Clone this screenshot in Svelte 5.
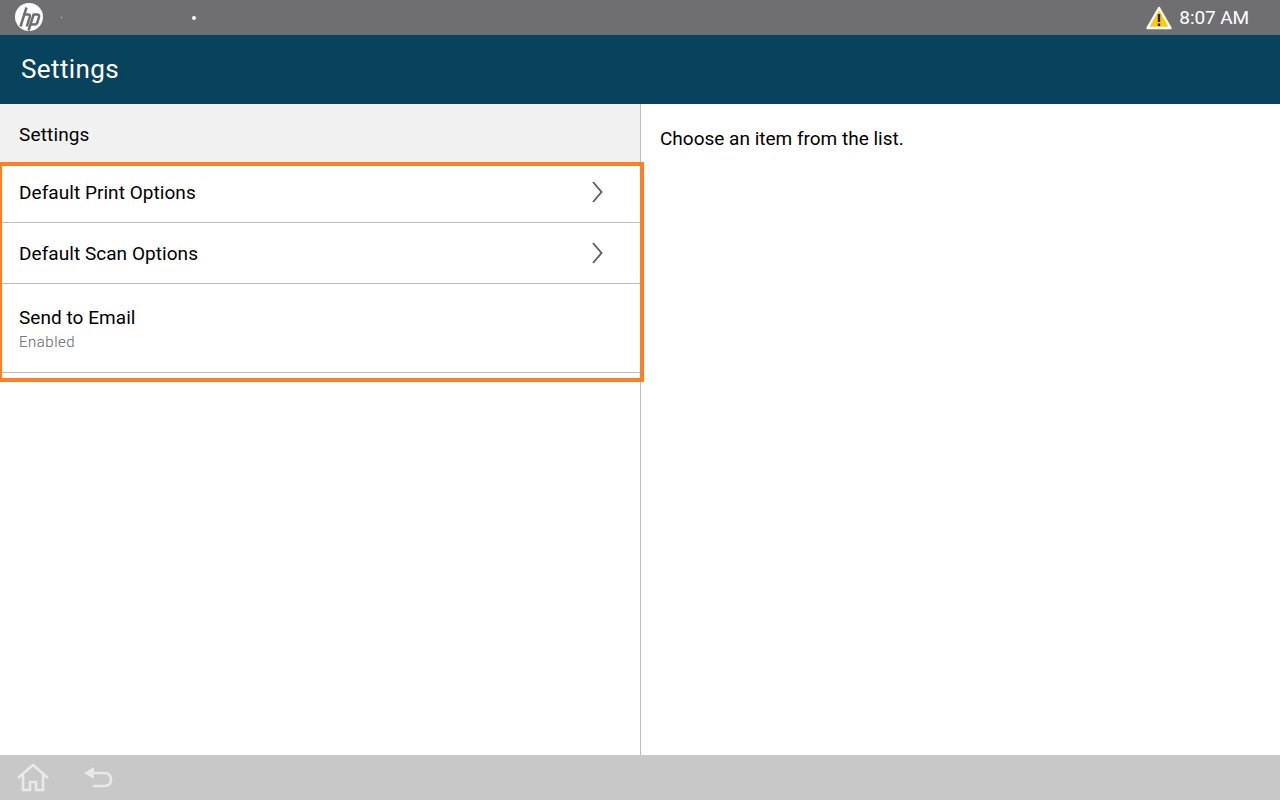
<script lang="ts">
    const options = [
        { label: "Default Print Options", chevron: true },
        { label: "Default Scan Options", chevron: true },
        { label: "Send to Email", sub: "Enabled" },
    ];
</script>

<div class="screen">
    <div class="status">
        <svg class="logo" viewBox="0 0 28 28" width="28" height="28">
            <circle cx="14" cy="14" r="14" fill="#fff" />
            <path d="M11.5 4.5 L5.5 23.5 M8 11.5 H13 Q15.5 11.5 14.8 13.8 L11.8 23.5 M18.8 11 L13.5 27.5 M18 11.5 H22 Q24.7 11.5 24 14 L22.2 20 Q21.6 21.6 19.5 21.6 H15.5" fill="none" stroke="#6f6f71" stroke-width="2.5" />
        </svg>
        <span class="dot small"></span>
        <span class="dot"></span>
        <div class="status-right">
            <svg class="warn" viewBox="0 0 26 24" width="26" height="24">
                <path d="M13 2 L24.5 22 H1.5 Z" fill="#ffcb05" stroke="#fff" stroke-width="2.4" stroke-linejoin="round" />
                <path d="M13 8 V16 M13 17.5 V20" stroke="#222" stroke-width="2.4" />
            </svg>
            <span class="time">8:07 AM</span>
        </div>
    </div>
    <header class="title">Settings</header>
    <main class="content">
        <section class="left">
            <div class="section-head">Settings</div>
            <div class="list">
                {#each options as opt}
                    <div class="row" class:tall={opt.sub}>
                        <div>
                            <div class="label">{opt.label}</div>
                            {#if opt.sub}<div class="sub">{opt.sub}</div>{/if}
                        </div>
                        {#if opt.chevron}
                            <svg class="chevron" viewBox="0 0 12 22" width="12" height="22">
                                <path d="M2 1 L10.5 11 L2 21" fill="none" stroke="#606062" stroke-width="1.9" />
                            </svg>
                        {/if}
                    </div>
                {/each}
                <div class="highlight"></div>
            </div>
        </section>
        <section class="right">Choose an item from the list.</section>
    </main>
    <footer class="nav">
        <svg viewBox="0 0 34 30" width="34" height="30">
            <path d="M2 15 L17 2 L32 15 M7 12 V27 H14 V19 H20 V27 H27 V12" fill="none" stroke="#e9e9e9" stroke-width="2.6" />
        </svg>
        <svg viewBox="0 0 30 24" width="30" height="24">
            <path d="M0 7 L10 1 V13 Z" fill="#e9e9e9" />
            <path d="M8 7 H20 Q27 7 27 13.5 Q27 20 20 20 H9" fill="none" stroke="#e9e9e9" stroke-width="2.6" />
        </svg>
    </footer>
</div>

<style>
    :global(body) {
        margin: 0;
    }

    .screen {
        width: 1280px;
        height: 800px;
        display: flex;
        flex-direction: column;
        overflow: hidden;
        background: #fff;
        font-family: Roboto, sans-serif;
        color: #000;
    }

    .status {
        height: 35px;
        flex: none;
        display: flex;
        align-items: center;
        background: #6f6f71;
        color: #fff;
        padding: 0 31px 0 15px;
    }

    .logo {
        margin: -2px 18px 0 0;
    }

    .dot {
        width: 4px;
        height: 4px;
        border-radius: 50%;
        background: #fff;
        margin-left: 130px;
    }

    .dot.small {
        width: 1px;
        height: 1px;
        margin-left: 0;
    }

    .status-right {
        margin-left: auto;
        display: flex;
        align-items: center;
        gap: 7px;
    }

    .time {
        font-size: 19px;
        letter-spacing: -0.1px;
    }

    .title {
        height: 67px;
        padding-bottom: 2px;
        flex: none;
        display: flex;
        align-items: center;
        padding-left: 21px;
        background: #08435d;
        color: #fff;
        font-size: 26px;
        letter-spacing: 0.4px;
    }

    .content {
        flex: 1;
        display: flex;
        min-height: 0;
    }

    .left {
        width: 640px;
        border-right: 1px solid #bdbdbd;
    }

    .section-head {
        height: 58px;
        padding-top: 1px;
        display: flex;
        align-items: center;
        padding-left: 19px;
        background: #f1f1f1;
        font-size: 19px;
        letter-spacing: 0.15px;
    }

    .list {
        position: relative;
    }

    .row {
        height: 59px;
        box-sizing: content-box;
        display: flex;
        align-items: center;
        justify-content: space-between;
        padding: 0 37px 0 19px;
        border-bottom: 1px solid #bdbdbd;
        font-size: 19px;
        letter-spacing: 0.05px;
    }

    .row + .row {
        height: 60px;
    }

    .row.tall {
        height: 88px;
    }

    .chevron {
        margin-top: -1px;
    }

    .sub {
        font-size: 15px;
        font-weight: 300;
        color: #5f5f5f;
        margin-top: 4px;
        letter-spacing: 0.5px;
    }

    .highlight {
        position: absolute;
        left: -2px;
        top: -1px;
        width: 646px;
        height: 220px;
        box-sizing: border-box;
        border: 4px solid #ff7f27;
    }

    .right {
        flex: 1;
        padding: 23px 19px;
        font-size: 19px;
    }

    .nav {
        height: 45px;
        flex: none;
        display: flex;
        align-items: center;
        gap: 34px;
        padding-left: 16px;
        background: #c8c8c8;
    }
</style>
